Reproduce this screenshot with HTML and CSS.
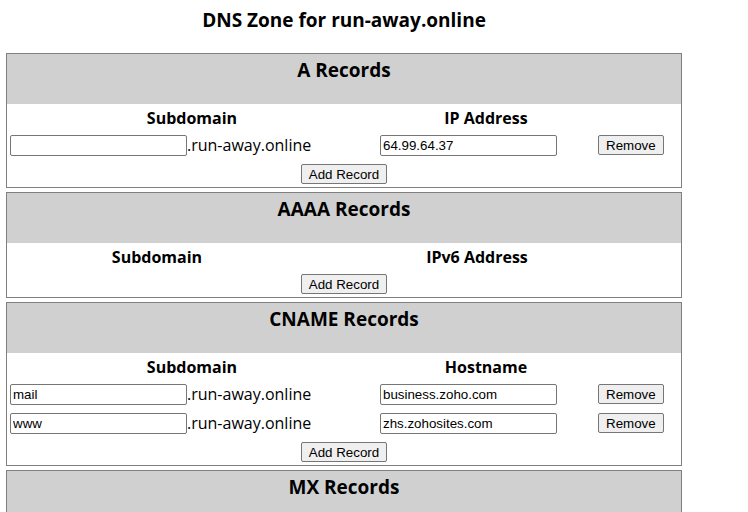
FILE: index.html
```html
<!DOCTYPE html>
<html lang="en">
<head>
<meta charset="utf-8">
<title>DNS Zone for run-away.online</title>
<link rel="stylesheet" href="styles.css">
</head>
<body>
<div class="zone">
  <h1 class="title">DNS Zone for run-away.online</h1>

  <section class="rs">
    <div class="rs-head">A Records</div>
    <div class="grid">
      <div class="col-h">Subdomain</div>
      <div class="col-h">IP Address</div>
      <div class="col-h"></div>
      <div class="cell"><input class="txt" type="text" value=""><span class="suffix">.run-away.online</span></div>
      <div class="cell"><input class="txt" type="text" value="64.99.64.37"></div>
      <div class="cell"><button class="btn" type="button">Remove</button></div>
    </div>
    <div class="add"><button class="btn" type="button">Add Record</button></div>
  </section>

  <section class="rs">
    <div class="rs-head">AAAA Records</div>
    <div class="grid grid-empty">
      <div class="col-h">Subdomain</div>
      <div class="col-h">IPv6 Address</div>
      <div class="col-h"></div>
    </div>
    <div class="add"><button class="btn" type="button">Add Record</button></div>
  </section>

  <section class="rs">
    <div class="rs-head">CNAME Records</div>
    <div class="grid">
      <div class="col-h">Subdomain</div>
      <div class="col-h">Hostname</div>
      <div class="col-h"></div>
      <div class="cell"><input class="txt" type="text" value="mail"><span class="suffix">.run-away.online</span></div>
      <div class="cell"><input class="txt" type="text" value="business.zoho.com"></div>
      <div class="cell"><button class="btn" type="button">Remove</button></div>
      <div class="cell"><input class="txt" type="text" value="www"><span class="suffix">.run-away.online</span></div>
      <div class="cell"><input class="txt" type="text" value="zhs.zohosites.com"></div>
      <div class="cell"><button class="btn" type="button">Remove</button></div>
    </div>
    <div class="add"><button class="btn" type="button">Add Record</button></div>
  </section>

  <section class="rs">
    <div class="rs-head">MX Records</div>
  </section>
</div>
</body>
</html>
```
FILE: styles.css
```css
html, body {
  margin: 0;
  padding: 0;
}
body {
  background: #ffffff;
  color: #000000;
  font-family: "Open Sans", "Noto Sans", sans-serif;
}
.zone {
  width: 676px;
  margin-left: 6px;
}
.title {
  margin: 0 0 20px;
  padding-top: 7px;
  font-size: 19px;
  line-height: 26px;
  font-weight: 700;
  text-align: center;
}
.rs {
  border: 1px solid #808080;
  margin-bottom: 4px;
}
.rs-head {
  background: #d0d0d0;
  height: 47px;
  padding-top: 3px;
  font-size: 19px;
  line-height: 26px;
  font-weight: 700;
  text-align: center;
}
.grid {
  display: grid;
  grid-template-columns: 370px 218px 86px;
  grid-template-rows: 28px;
  grid-auto-rows: 29px;
}
.grid-empty {
  grid-template-columns: 300px 340px 34px;
}
.col-h {
  font-size: 16px;
  font-weight: 700;
  line-height: 28px;
  text-align: center;
}
.cell {
  display: flex;
  align-items: flex-start;
  padding: 3px 3px 0;
}
.txt {
  box-sizing: border-box;
  width: 177px;
  height: 21px;
  margin: 0;
  padding: 1px 2px;
  border: 1px solid #767676;
  border-radius: 2px;
  background: #ffffff;
  color: #000000;
  font-family: "Liberation Sans", Arial, sans-serif;
  font-size: 13.33px;
}
.suffix {
  font-size: 16px;
  line-height: 21px;
}
.btn {
  box-sizing: border-box;
  height: 20px;
  margin: 0;
  padding: 0 7px;
  border: 1px solid #767676;
  border-radius: 2px;
  background: #efefef;
  color: #000000;
  font-family: "Liberation Sans", Arial, sans-serif;
  font-size: 13.33px;
}
.add {
  display: flex;
  justify-content: center;
  align-items: flex-start;
  height: 20px;
  padding: 3px 0;
}
```
